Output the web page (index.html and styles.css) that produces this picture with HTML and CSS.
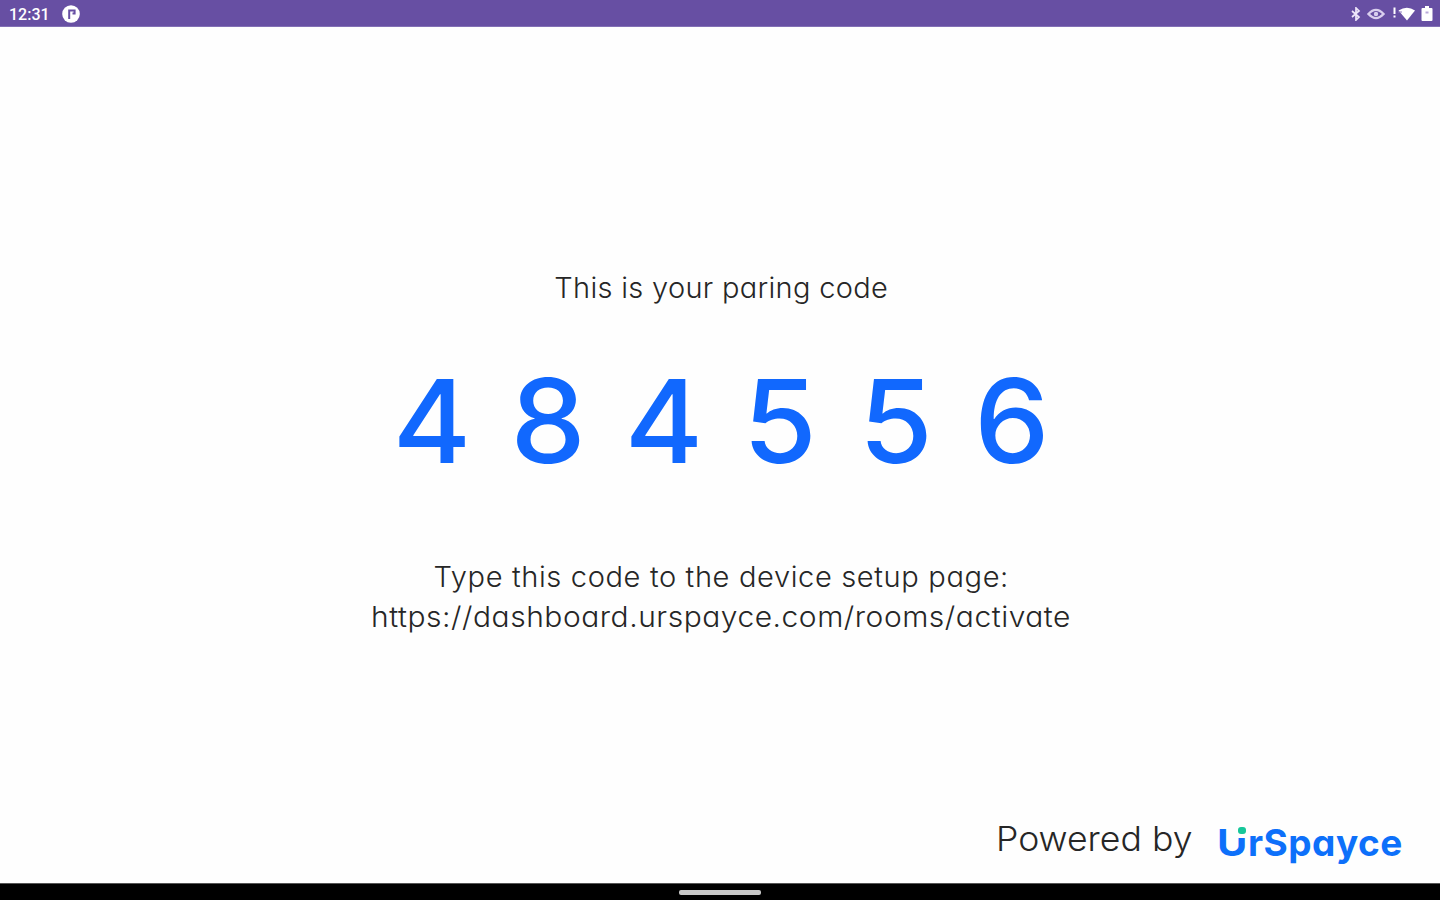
FILE: index.html
```html
<!DOCTYPE html>
<html lang="en">
<head>
    <meta charset="UTF-8">
    <meta name="viewport" content="width=device-width, initial-scale=1.0">
    <title>UrSpayce - Pairing code</title>
    <link rel="stylesheet" href="styles.css">
</head>
<body>
    <header class="status-bar">
        <div class="status-left">
            <span class="clock">12:31</span>
            <svg class="app-icon" width="18" height="18" viewBox="0 0 18 18">
                <circle cx="9" cy="9" r="8.8" fill="#fff"/>
                <path d="M7.2 14V5.4H12.6V8.6H10.5" fill="none" stroke="#674fa3" stroke-width="2"/>
            </svg>
        </div>
        <div class="status-right">
            <svg width="10" height="14" viewBox="0 0 10 14">
                <path d="M1 4L8 10L5 13V1L8 4L1 10" fill="none" stroke="#eee6fa" stroke-width="1.7"/>
            </svg>
            <svg width="18" height="14" viewBox="0 0 18 14">
                <path d="M1.5 7Q9-1.2 16.5 7Q9 15.2 1.5 7Z" fill="none" stroke="#d9cfee" stroke-width="2.4"/>
                <circle cx="9" cy="7" r="2.2" fill="#d9cfee"/>
            </svg>
            <svg width="24" height="15" viewBox="0 0 24 15">
                <path d="M3.5 1.5V8M3.5 9.5V11.5" stroke="#fff" stroke-width="2"/>
                <path d="M7.5 4.5Q16-1 24 4.5L16 14.5Z" fill="#fff"/>
                <path d="M7 6H11" stroke="#8e7bbd" stroke-width="1"/>
            </svg>
            <svg width="12" height="16" viewBox="0 0 12 16">
                <path d="M4 0H8V2H10.5Q11.5 2 11.5 3V14Q11.5 15 10.5 15H1.5Q.5 15 .5 14V3Q.5 2 1.5 2H4Z" fill="#fff"/>
                <path d="M4.5 6.5H7.5" stroke="#b8a9d8" stroke-width="2"/>
            </svg>
        </div>
    </header>

    <main class="pairing">
        <p class="intro">This is your paring code</p>
        <div class="code">
            <span>4</span>
            <span>8</span>
            <span>4</span>
            <span>5</span>
            <span>5</span>
            <span>6</span>
        </div>
        <p class="setup">Type this code to the device setup page:</p>
        <p class="setup-url">https://dashboard.urspayce.com/rooms/activate</p>
    </main>

    <footer class="powered">
        <span class="powered-label">Powered by</span>
        <span class="logo"><span class="logo-u">U</span>rSpayce</span>
    </footer>

    <div class="nav-bar">
        <div class="nav-handle"></div>
    </div>
</body>
</html>
```

FILE: styles.css
```css
* {
    margin: 0;
    padding: 0;
    box-sizing: border-box;
}

body {
    font-family: 'Inter', sans-serif;
    font-feature-settings: "cv11";
    background-color: #fefefe;
    color: #262626;
    height: 100vh;
    display: flex;
    flex-direction: column;
    overflow: hidden;
    white-space: nowrap;
}

.status-bar {
    height: 27px;
    padding: 1px 7px 0 9px;
    background: #674fa3;
    border-bottom: 1px solid #8270b5;
    color: white;
    display: flex;
    justify-content: space-between;
    align-items: center;
}

.status-left,
.status-right {
    display: flex;
    align-items: center;
}

.status-left {
    gap: 13px;
}

.status-right {
    gap: 6px;
}

.clock {
    width: 40px;
    padding-top: 1px;
    font-family: 'Roboto', sans-serif;
    font-size: 16px;
    font-weight: 500;
}

.pairing {
    flex: 1;
    display: flex;
    flex-direction: column;
    align-items: center;
    padding: 241px 0 0 2px;
    font-size: 28px;
    font-weight: 300;
    line-height: 40px;
}

.intro {
    letter-spacing: 0.3px;
    transform: scaleX(1.035);
}

.code {
    display: flex;
    margin: 43px 0 66px;
    padding-left: 1px;
    color: #1168fe;
    font-size: 116px;
    font-weight: 500;
    line-height: 140px;
}

.code span {
    width: 116px;
    text-align: center;
    transform: scaleX(1.03);
}

.setup {
    letter-spacing: 0.6px;
    transform: scaleX(1.038);
}

.setup-url {
    letter-spacing: 0.5px;
    transform: scaleX(1.07);
}

.powered {
    height: 84px;
    padding: 15px 38px 0 0;
    display: flex;
    justify-content: flex-end;
    line-height: 50px;
}

.powered-label {
    width: 195px;
    margin-right: 26px;
    font-size: 34px;
    font-weight: 300;
    transform: scaleX(1.047);
    transform-origin: left;
}

.logo {
    position: relative;
    width: 185px;
    padding-top: 4px;
    color: #0d70fa;
    font-size: 37px;
    font-weight: 700;
    letter-spacing: 0.5px;
}

.logo-u {
    display: inline-block;
    width: 31px;
    transform: scaleX(1.12);
    transform-origin: left;
}

/* gap in the right arm of the U */
.logo::before {
    content: "";
    position: absolute;
    z-index: 1;
    top: 13px;
    left: 19px;
    width: 11px;
    height: 11px;
    background: #fefefe;
}

/* green dot over the U */
.logo::after {
    content: "";
    position: absolute;
    z-index: 1;
    top: 13px;
    left: 21px;
    width: 8px;
    height: 7px;
    border-radius: 3px;
    background: #16c79a;
}

.nav-bar {
    height: 17px;
    background: #000;
    border-top: 1px solid #555;
    display: flex;
    justify-content: center;
    padding-top: 6px;
}

.nav-handle {
    width: 82px;
    height: 5px;
    border-radius: 2px;
    background: #c8c8c8;
}
```
